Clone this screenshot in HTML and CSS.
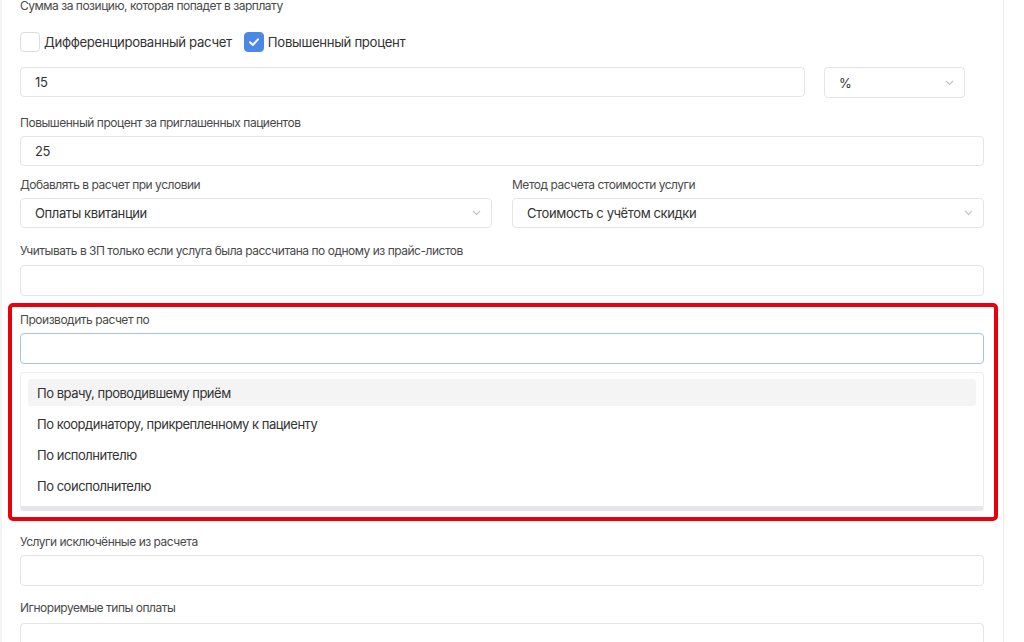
FILE: index.html
```html
<html>

<head>
    <meta charset="utf-8">
    <link rel="stylesheet" href="styles.css">
</head>
    <body>
        <div class="page">

            <div class="group first">
                <p class="label">Сумма за позицию, которая попадет в зарплату</p>
            </div>

            <div class="checks">
                <label class="check">
                    <span class="box"></span>
                    <span>Дифференцированный расчет</span>
                </label>
                <label class="check">
                    <span class="box checked">
                        <svg width="12" height="10" viewBox="0 0 12 10"><path d="M2 5.2 L4.8 8 L10 2.4" fill="none" stroke="#fff" stroke-width="2" stroke-linecap="round" stroke-linejoin="round"/></svg>
                    </span>
                    <span>Повышенный процент</span>
                </label>
            </div>

            <div class="row-sum">
                <input class="field grow" type="text" value="15">
                <div class="field select unit">
                    <span>%</span>
                    <svg class="chevron" width="9" height="6" viewBox="0 0 9 6"><path d="M1 1 L4.5 4.5 L8 1" fill="none" stroke="#c2c2c2" stroke-width="1.2"/></svg>
                </div>
            </div>

            <div class="group g-invite">
                <p class="label">Повышенный процент за приглашенных пациентов</p>
                <input class="field" type="text" value="25">
            </div>

            <div class="cols g-cond">
                <div class="group">
                    <p class="label">Добавлять в расчет при условии</p>
                    <div class="field select">
                        <span>Оплаты квитанции</span>
                        <svg class="chevron" width="9" height="6" viewBox="0 0 9 6"><path d="M1 1 L4.5 4.5 L8 1" fill="none" stroke="#c2c2c2" stroke-width="1.2"/></svg>
                    </div>
                </div>
                <div class="group">
                    <p class="label">Метод расчета стоимости услуги</p>
                    <div class="field select">
                        <span>Стоимость с учётом скидки</span>
                        <svg class="chevron" width="9" height="6" viewBox="0 0 9 6"><path d="M1 1 L4.5 4.5 L8 1" fill="none" stroke="#c2c2c2" stroke-width="1.2"/></svg>
                    </div>
                </div>
            </div>

            <div class="group g-price">
                <p class="label">Учитывать в ЗП только если услуга была рассчитана по одному из прайс-листов</p>
                <div class="field tall"></div>
            </div>

            <div class="highlight">
                <div class="group">
                    <p class="label">Производить расчет по</p>
                    <div class="field tall focused"></div>
                </div>
                <ul class="dropdown">
                    <li class="active">По врачу, проводившему приём</li>
                    <li>По координатору, прикрепленному к пациенту</li>
                    <li>По исполнителю</li>
                    <li>По соисполнителю</li>
                </ul>
            </div>

            <div class="group g-excluded">
                <p class="label">Услуги исключённые из расчета</p>
                <div class="field tall"></div>
            </div>

            <div class="group g-ignored">
                <p class="label">Игнорируемые типы оплаты</p>
                <div class="field tall"></div>
            </div>

        </div>
    </body>

</html>
```

FILE: styles.css
```css
html , body {
    width: 100%;
    height: 100%;
    overflow: hidden;
}
*{
    box-sizing: border-box;
}
body{
    margin: 0;
    padding: 0;
    background-color: #fff;
    font-family: Inter, "Noto Sans", sans-serif;
    letter-spacing: -0.03em;
    color: #333;
}
.page{
    width: 1004px;
    min-height: 100%;
    padding: 0 19px 0 18px;
    border-left: 2px solid #f4f4f4;
    border-right: 1px solid #ececec;
}
.label{
    margin: 0 0 5px;
    font-size: 12px;
    line-height: 16px;
    color: #4a4a4a;
}
.group.first{
    margin-top: -2px;
}
.group.first .label{
    margin: 0;
}
.checks{
    display: flex;
    gap: 12px;
    margin-top: 18px;
    height: 20px;
}
.check{
    display: flex;
    align-items: center;
    gap: 4px;
    font-size: 13.2px;
    letter-spacing: -0.025em;
    color: #333;
}
.box{
    width: 20px;
    height: 20px;
    border: 1px solid #dcdcdc;
    border-radius: 4px;
    display: flex;
    align-items: center;
    justify-content: center;
    background-color: #fff;
}
.box.checked{
    background-color: #4a88e6;
    border-color: #4a88e6;
}
.field{
    display: block;
    width: 100%;
    height: 30px;
    margin: 0;
    padding: 0 14px;
    border: 1px solid #e4e4e4;
    border-radius: 4px;
    background-color: #fff;
    font-family: inherit;
    font-size: 13px;
    letter-spacing: -0.03em;
    color: #333;
    outline: none;
}
.field.tall{
    height: 31px;
}
.field.focused{
    border-color: #a8c2e2;
}
.select{
    display: flex;
    align-items: center;
    justify-content: space-between;
    padding-right: 10px;
}
.row-sum{
    display: flex;
    gap: 19px;
    margin-top: 15px;
    padding-right: 19px;
}
.grow{
    flex: 1;
}
.unit{
    width: 141px;
    flex: none;
    height: 31px;
}
.g-invite{
    margin-top: 17px;
}
.g-invite .field{
    height: 30px;
}
.cols{
    display: flex;
    gap: 20px;
}
.cols .group{
    flex: 1;
}
.g-cond{
    margin-top: 11px;
}
.g-price{
    margin-top: 15px;
}
.g-price .label{
    margin-bottom: 6px;
}
.highlight{
    margin: 7px -14px 0 -12px;
    padding: 5px 10px 6px 8px;
    border: 4px solid #e8000b;
    border-radius: 5px;
}
.dropdown{
    margin: 8px 0 0;
    padding: 6px 7px 7px;
    list-style: none;
    border: 1px solid #ececec;
    border-bottom: 5px solid #e6e6ea;
    border-radius: 4px;
    background-color: #fff;
}
.dropdown li{
    height: 27px;
    margin-bottom: 4px;
    padding: 0 9px;
    display: flex;
    align-items: center;
    font-size: 13px;
    color: #333;
    border-radius: 3px;
}
.dropdown li:last-child{
    margin-bottom: 0;
}
.dropdown li.active{
    background-color: #f4f4f4;
}
.g-excluded{
    margin-top: 13px;
}
.g-ignored{
    margin-top: 14px;
}
.g-ignored .label{
    margin-bottom: 7px;
}
```
